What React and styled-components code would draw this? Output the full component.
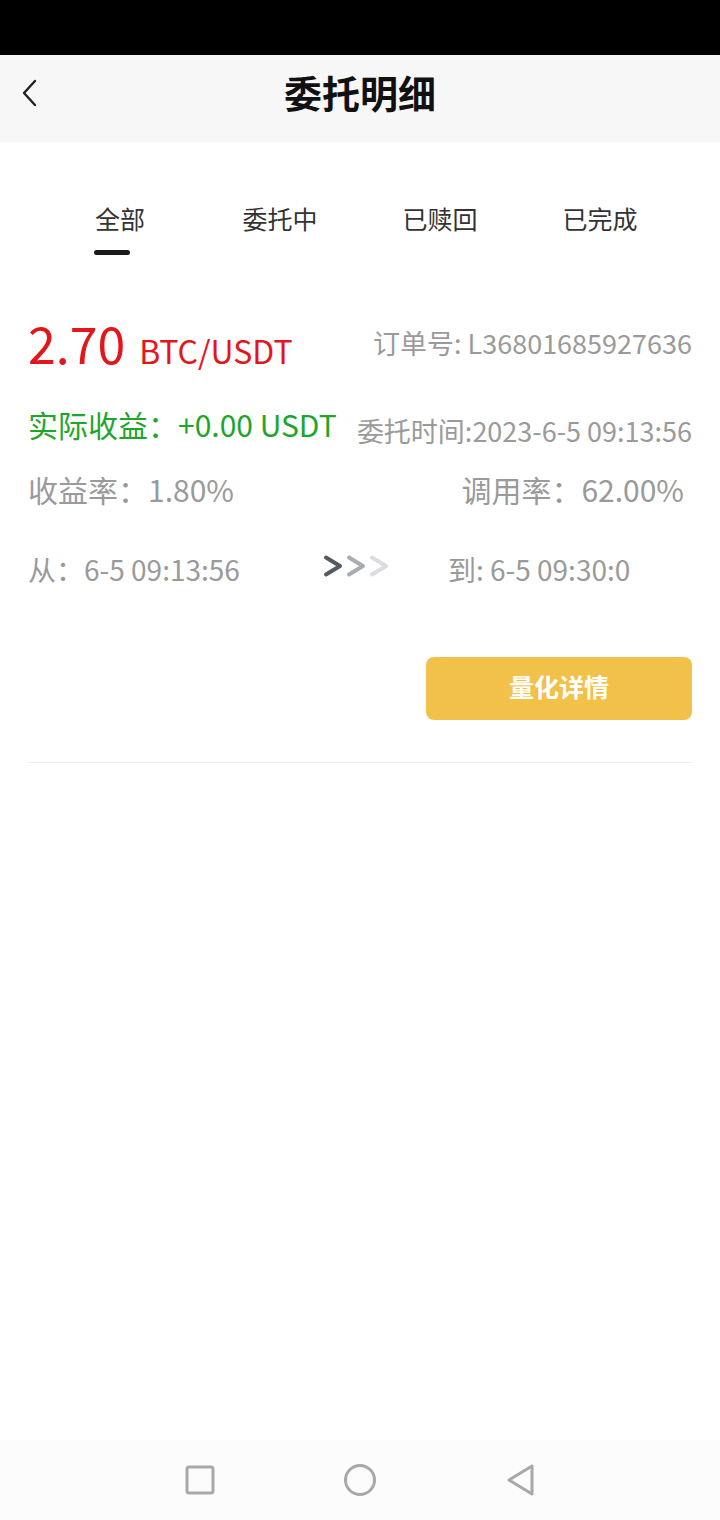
import React from 'react';
import styled, { createGlobalStyle } from 'styled-components';

const Global = createGlobalStyle`
  html, body {
    margin: 0;
    padding: 0;
    background: #ffffff;
    font-family: 'Noto Sans CJK SC', 'Noto Sans', sans-serif;
  }
  * { box-sizing: border-box; }
`;

const Page = styled.div`
  width: 720px;
  height: 1520px;
  display: flex;
  flex-direction: column;
  background: #ffffff;
`;

const StatusBar = styled.div`
  height: 55px;
  background: #000000;
`;

const Header = styled.div`
  height: 87px;
  background: #f7f7f7;
  display: flex;
  align-items: center;
  justify-content: center;
  position: relative;
`;

const BackButton = styled.div`
  position: absolute;
  left: 18px;
  top: 22px;
  width: 24px;
  height: 32px;
  display: flex;
`;

const Title = styled.h1`
  margin: -14px 0 0;
  font-size: 38px;
  font-weight: 700;
  color: #111;
  line-height: 1;
`;

const Tabs = styled.div`
  display: flex;
  padding: 0 40px;
  margin-top: 58px;
`;

const Tab = styled.div`
  width: 160px;
  display: flex;
  flex-direction: column;
  align-items: center;
  font-size: 25px;
  line-height: 36px;
  color: #333;
`;

const TabLine = styled.div`
  width: 36px;
  height: 5px;
  border-radius: 3px;
  margin-top: 14px;
  margin-right: 16px;
  background: ${p => (p.$active ? '#1b1b1f' : 'transparent')};
`;

const Card = styled.div`
  margin: 0 28px;
  padding-top: 62px;
  padding-bottom: 42px;
  border-bottom: 1px solid #efefef;
  display: flex;
  flex-direction: column;
`;

const Row = styled.div`
  display: flex;
  justify-content: space-between;
  align-items: ${p => p.$align || 'center'};
  margin-top: ${p => p.$mt || 0}px;
`;

const Price = styled.div`
  color: #e3161b;
  display: flex;
  align-items: baseline;
  line-height: 1;
`;

const Big = styled.span`
  font-size: 50px;
`;

const Pair = styled.span`
  font-size: 32px;
  margin-left: 14px;
`;

const Info = styled.div`
  font-size: ${p => p.$size || 26}px;
  color: ${p => p.$color || '#9a9a9a'};
  line-height: 1;
  white-space: nowrap;
  margin-right: ${p => p.$mr || 0}px;
`;

const Arrows = styled.div`
  display: flex;
  gap: 1px;
  margin-left: 82px;
  margin-top: -6px;
`;

const Range = styled.div`
  display: flex;
  align-items: center;
  margin-top: 51px;
`;

const ToText = styled(Info)`
  margin-left: 58px;
`;

const ButtonRow = styled.div`
  display: flex;
  justify-content: flex-end;
  margin-top: 74px;
`;

const DetailButton = styled.button`
  width: 266px;
  height: 63px;
  padding: 0 0 5px;
  border: none;
  border-radius: 8px;
  background: #f2c14a;
  color: #ffffff;
  font-family: inherit;
  font-size: 25px;
  line-height: 1;
  font-weight: 700;
`;

const Spacer = styled.div`
  flex: 1;
`;

const NavBar = styled.div`
  height: 80px;
  background: #fcfcfc;
  display: flex;
  align-items: center;
  justify-content: center;
  gap: 120px;
`;

const NavItem = styled.div`
  width: 40px;
  display: flex;
  justify-content: center;
`;

const Chevron = ({ color }) => (
  <svg width="22" height="24" viewBox="0 0 22 24">
    <path d="M4 3.5 L18 12 L4 20.5" fill="none" stroke={color} strokeWidth="4" strokeLinecap="round" strokeLinejoin="round" />
  </svg>
);

const tabs = ['全部', '委托中', '已赎回', '已完成'];

export default function App() {
  return (
    <Page>
      <Global />
      <StatusBar />
      <Header>
        <BackButton>
          <svg width="24" height="32" viewBox="0 0 24 32">
            <path d="M17 4 L6 16 L17 28" fill="none" stroke="#222" strokeWidth="2.4" strokeLinecap="round" strokeLinejoin="round" />
          </svg>
        </BackButton>
        <Title>委托明细</Title>
      </Header>

      <Tabs>
        {tabs.map((t, i) => (
          <Tab key={t}>
            {t}
            <TabLine $active={i === 0} />
          </Tab>
        ))}
      </Tabs>

      <Card>
        <Row $align="flex-end">
          <Price>
            <Big>2.70</Big>
            <Pair>BTC/USDT</Pair>
          </Price>
          <Info $size={27} style={{ marginBottom: 11 }}>订单号: L36801685927636</Info>
        </Row>
        <Row $mt={36}>
          <Info $size={30} $color="#1ea52b">实际收益：+0.00 USDT</Info>
          <Info $size={27} style={{ marginTop: 14 }}>委托时间:2023-6-5 09:13:56</Info>
        </Row>
        <Row $mt={30}>
          <Info $size={30}>收益率：1.80%</Info>
          <Info $size={30} $mr={8}>调用率：62.00%</Info>
        </Row>
        <Range>
          <Info $size={28}>从：6-5 09:13:56</Info>
          <Arrows>
            <Chevron color="#555b60" />
            <Chevron color="#a9adb0" />
            <Chevron color="#dcdde0" />
          </Arrows>
          <ToText $size={28}>到: 6-5 09:30:0</ToText>
        </Range>
        <ButtonRow>
          <DetailButton>量化详情</DetailButton>
        </ButtonRow>
      </Card>

      <Spacer />

      <NavBar>
        <NavItem>
          <svg width="32" height="32" viewBox="0 0 32 32">
            <rect x="3" y="3" width="26" height="26" rx="2" fill="none" stroke="#a8a8a8" strokeWidth="3" />
          </svg>
        </NavItem>
        <NavItem>
          <svg width="34" height="34" viewBox="0 0 34 34">
            <circle cx="17" cy="17" r="14.5" fill="none" stroke="#a8a8a8" strokeWidth="3" />
          </svg>
        </NavItem>
        <NavItem>
          <svg width="32" height="34" viewBox="0 0 32 34">
            <path d="M28 3 L5 17 L28 31 Z" fill="none" stroke="#a8a8a8" strokeWidth="3" strokeLinejoin="round" />
          </svg>
        </NavItem>
      </NavBar>
    </Page>
  );
}
